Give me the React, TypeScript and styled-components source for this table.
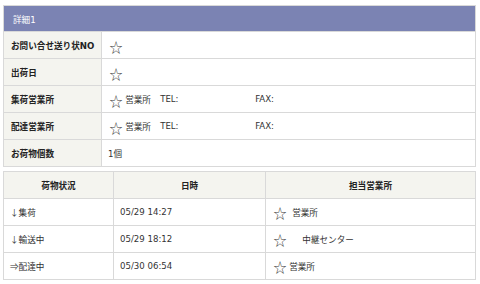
import React from "react";
import styled, { createGlobalStyle } from "styled-components";

const Global = createGlobalStyle`
  html, body { margin: 0; padding: 0; background: #ffffff; }
  body {
    font-family: "DejaVu Sans", "Noto Sans CJK JP", sans-serif;
    font-size: 8.6px;
    color: #333333;
  }
`;

const Page = styled.div`
  width: 480px;
  padding: 5px 4px 0 3px;
  box-sizing: border-box;
  display: flex;
  flex-direction: column;
  gap: 4px;
`;

const Table = styled.table`
  width: 100%;
  border-collapse: collapse;
  table-layout: fixed;
  border: 1px solid #d9d9d9;
`;

const Col = styled.col<{ $w?: number }>`
  ${(p) => (p.$w ? `width: ${p.$w}px;` : "")}
`;

const Caption = styled.th`
  background: #7b83b3;
  color: #ffffff;
  font-weight: normal;
  text-align: left;
  height: 25px;
  padding: 0 0 0 9px;
  border: 1px solid #d9d9d9;
`;

const Label = styled.th`
  background: #f4f4ef;
  font-weight: bold;
  text-align: left;
  color: #222222;
  height: 26px;
  padding: 0 0 0 7px;
  border: 1px solid #d9d9d9;
  white-space: nowrap;
`;

const Cell = styled.td<{ $pad?: number; $cjk?: boolean }>`
  height: 26px;
  padding: 0 0 0 ${(p) => p.$pad ?? 6}px;
  border: 1px solid #d9d9d9;
  white-space: nowrap;
  vertical-align: middle;
  ${(p) => (p.$cjk ? `font-family: "Noto Sans CJK JP", sans-serif;` : "")}
`;

const Head = styled.th`
  background: #f4f4ef;
  font-weight: bold;
  color: #222222;
  height: 26px;
  padding: 0;
  border: 1px solid #d9d9d9;
  text-align: center;
`;

const Star = styled.span<{ $drop?: number }>`
  display: inline-block;
  font-family: "DejaVu Sans", sans-serif;
  font-size: 18px;
  line-height: 17px;
  color: #333333;
  vertical-align: middle;
  position: relative;
  top: ${(p) => p.$drop ?? 1}px;
  transform: scaleX(0.9);
`;

const Office = styled.span<{ $w?: number; $gap?: number }>`
  display: inline-block;
  ${(p) => (p.$w ? `width: ${p.$w}px;` : "")}
  padding-left: ${(p) => p.$gap ?? 1}px;
  vertical-align: middle;
`;

const Field = styled.span<{ $w?: number }>`
  display: inline-block;
  ${(p) => (p.$w ? `width: ${p.$w}px;` : "")}
  vertical-align: middle;
`;

const details: { label: string; kind: "star" | "office" | "text"; text?: string }[] = [
  { label: "お問い合せ送り状NO", kind: "star" },
  { label: "出荷日", kind: "star" },
  { label: "集荷営業所", kind: "office" },
  { label: "配達営業所", kind: "office" },
  { label: "お荷物個数", kind: "text", text: "1個" },
];

const history = [
  { status: "↓集荷", time: "05/29 14:27", office: "営業所", gap: 4 },
  { status: "↓輸送中", time: "05/29 18:12", office: "\u00a0\u00a0\u00a0中継センター", gap: 6 },
  { status: "⇒配達中", time: "05/30 06:54", office: "営業所", gap: 1 },
];

export default function App() {
  return (
    <>
      <Global />
      <Page>
        <Table>
          <colgroup>
            <Col $w={98} />
            <Col />
          </colgroup>
          <thead>
            <tr>
              <Caption colSpan={2}>詳細1</Caption>
            </tr>
          </thead>
          <tbody>
            {details.map((d) => (
              <tr key={d.label}>
                <Label>{d.label}</Label>
                {d.kind === "star" && (
                  <Cell>
                    <Star $drop={2}>☆</Star>
                  </Cell>
                )}
                {d.kind === "office" && (
                  <Cell>
                    <Star $drop={2}>☆</Star>
                    <Office $w={35}>営業所</Office>
                    <Field $w={95}>TEL:</Field>
                    <Field>FAX:</Field>
                  </Cell>
                )}
                {d.kind === "text" && <Cell>{d.text}</Cell>}
              </tr>
            ))}
          </tbody>
        </Table>
        <Table>
          <colgroup>
            <Col $w={110} />
            <Col $w={152} />
            <Col />
          </colgroup>
          <thead>
            <tr>
              <Head>荷物状況</Head>
              <Head>日時</Head>
              <Head>担当営業所</Head>
            </tr>
          </thead>
          <tbody>
            {history.map((h) => (
              <tr key={h.time}>
                <Cell $cjk>{h.status}</Cell>
                <Cell>{h.time}</Cell>
                <Cell>
                  <Star $drop={1}>☆</Star>
                  <Office $gap={h.gap}>{h.office}</Office>
                </Cell>
              </tr>
            ))}
          </tbody>
        </Table>
      </Page>
    </>
  );
}
